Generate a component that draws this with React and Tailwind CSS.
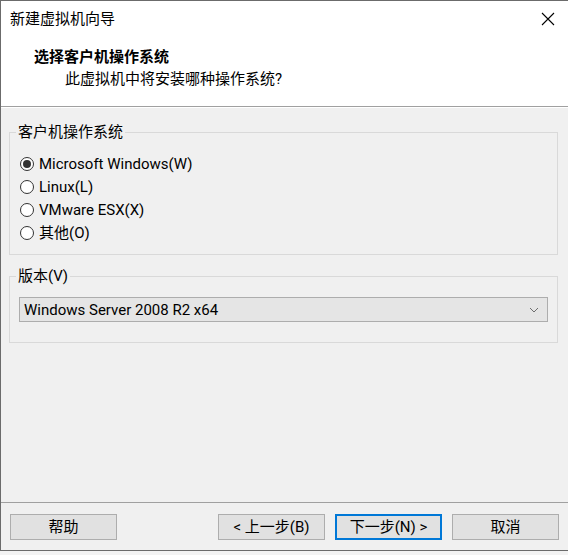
import React from 'react';

const font = { fontFamily: 'Roboto, "Noto Sans CJK SC", sans-serif' };

function Radio({ checked, label }) {
  return (
    <label className="flex h-[23px] items-center gap-[5px]">
      <span className="flex h-[14px] w-[14px] items-center justify-center rounded-full border border-[#333333] bg-white">
        {checked && <span className="h-[8px] w-[8px] rounded-full bg-[#333333]" />}
      </span>
      <span>{label}</span>
    </label>
  );
}

function Button({ children, primary }) {
  return (
    <button
      className={
        primary
          ? 'flex h-[26px] w-[107px] items-center justify-center border-2 border-[#0078d7] bg-[#e1e1e1] leading-[20px]'
          : 'flex h-[26px] w-[107px] items-center justify-center border border-[#adadad] bg-[#e1e1e1] leading-[20px]'
      }
    >
      {children}
    </button>
  );
}

export default function App() {
  return (
    <div className="h-[555px] w-[568px] bg-[#f3f3f3] text-[15px] leading-[20px] text-black" style={font}>
      <div className="flex h-[551px] w-[568px] flex-col border-b border-l border-t border-[#6b6b6b] bg-[#f0f0f0]">
        {/* title bar */}
        <div className="flex h-[36px] items-center justify-between bg-white pl-[9px] pr-[13px]">
          <span>新建虚拟机向导</span>
          <svg width="14" height="14" viewBox="0 0 14 14">
            <path d="M1 1 L13 13 M13 1 L1 13" stroke="#000" strokeWidth="1.1" />
          </svg>
        </div>

        {/* header */}
        <div className="h-[69px] bg-white pt-[10px]">
          <div className="pl-[33px] font-bold">选择客户机操作系统</div>
          <div className="mt-[2px] pl-[64px]">此虚拟机中将安装哪种操作系统?</div>
        </div>
        <div className="h-[2px] border-b border-t-0 border-b-white bg-[#a0a0a0]" />

        {/* body */}
        <div className="flex flex-1 flex-col pl-[8px] pr-[10px]">
          <fieldset className="mt-[14px] border border-[#d9d9d9] pb-[10px] pl-[10px] pt-[10px]">
            <legend className="ml-[-4px] px-[2px]">客户机操作系统</legend>
            <Radio checked label="Microsoft Windows(W)" />
            <Radio label="Linux(L)" />
            <Radio label="VMware ESX(X)" />
            <Radio label="其他(O)" />
          </fieldset>

          <fieldset className="mt-[11px] border border-[#d9d9d9] pb-[20px] pl-[9px] pr-[9px] pt-[11px]">
            <legend className="ml-[-3px] px-[2px]">版本(V)</legend>
            <div className="flex h-[25px] items-center justify-between border border-[#adadad] bg-[#e5e5e5] pl-[4px] pr-[8px]">
              <span>Windows Server 2008 R2 x64</span>
              <svg width="10" height="6" viewBox="0 0 10 6">
                <path d="M1 1 L5 5 L9 1" fill="none" stroke="#6d6d6d" strokeWidth="1" />
              </svg>
            </div>
          </fieldset>
        </div>

        {/* footer */}
        <div className="flex items-center justify-between border-t border-[#a0a0a0] pb-[10px] pl-[9px] pr-[9px] pt-[11px]">
          <Button>帮助</Button>
          <div className="flex gap-[10px]">
            <Button>&lt; 上一步(B)</Button>
            <Button primary>下一步(N) &gt;</Button>
            <Button>取消</Button>
          </div>
        </div>
      </div>
    </div>
  );
}
